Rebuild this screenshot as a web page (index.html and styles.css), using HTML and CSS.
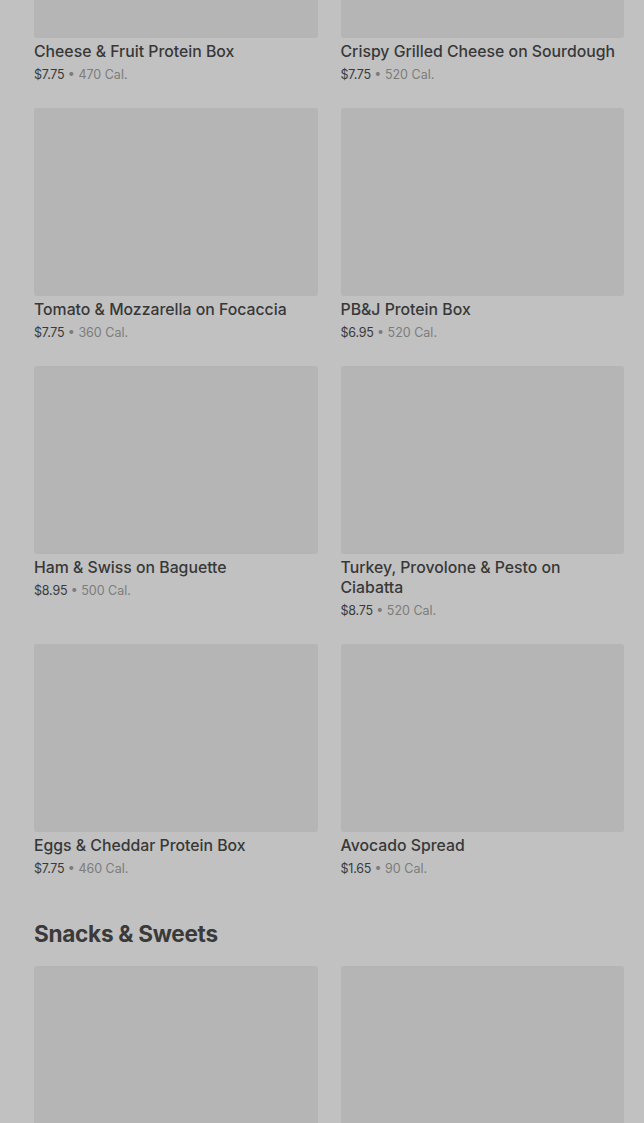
FILE: index.html
```html
<!DOCTYPE html>
<html>
	<head>
		<meta charset="utf-8">
		<title>Menu</title>
		<link rel="stylesheet" href="styles.css">
	</head>
	<body>
		<div class="menu">
			<ul class="grid">
				<li class="item">
					<div class="pic"></div>
					<p class="name">Cheese &amp; Fruit Protein Box</p>
					<p class="info">$7.75 <span class="cal">&bull; 470 Cal.</span></p>
				</li>
				<li class="item">
					<div class="pic"></div>
					<p class="name">Crispy Grilled Cheese on Sourdough</p>
					<p class="info">$7.75 <span class="cal">&bull; 520 Cal.</span></p>
				</li>
				<li class="item">
					<div class="pic"></div>
					<p class="name">Tomato &amp; Mozzarella on Focaccia</p>
					<p class="info">$7.75 <span class="cal">&bull; 360 Cal.</span></p>
				</li>
				<li class="item">
					<div class="pic"></div>
					<p class="name">PB&amp;J Protein Box</p>
					<p class="info">$6.95 <span class="cal">&bull; 520 Cal.</span></p>
				</li>
				<li class="item">
					<div class="pic"></div>
					<p class="name">Ham &amp; Swiss on Baguette</p>
					<p class="info">$8.95 <span class="cal">&bull; 500 Cal.</span></p>
				</li>
				<li class="item">
					<div class="pic"></div>
					<p class="name">Turkey, Provolone &amp; Pesto on Ciabatta</p>
					<p class="info">$8.75 <span class="cal">&bull; 520 Cal.</span></p>
				</li>
				<li class="item">
					<div class="pic"></div>
					<p class="name">Eggs &amp; Cheddar Protein Box</p>
					<p class="info">$7.75 <span class="cal">&bull; 460 Cal.</span></p>
				</li>
				<li class="item">
					<div class="pic"></div>
					<p class="name">Avocado Spread</p>
					<p class="info">$1.65 <span class="cal">&bull; 90 Cal.</span></p>
				</li>
			</ul>

			<h2 class="title">Snacks &amp; Sweets</h2>
			<ul class="grid">
				<li class="item">
					<div class="pic"></div>
				</li>
				<li class="item">
					<div class="pic"></div>
				</li>
			</ul>
		</div>
	</body>
</html>
```

FILE: styles.css
```css
*{
	margin: 0;
	padding: 0;
}

ul{
	list-style: none;
}

body{
	background-color: #c1c1c1;
	font-family: Inter, "Noto Sans", sans-serif;
	color: #3a3a3a;
	overflow: hidden;
}

/* page is scrolled, first row is cut at the top */
.menu{
	margin-top: -150px;
	padding: 0 20px 0 34px;
}

.grid{
	display: grid;
	grid-template-columns: 1fr 1fr;
	column-gap: 23px;
	row-gap: 23px;
}

.item .pic{
	height: 188px;
	background-color: #b5b5b5;
	border-radius: 3px;
}

.item .name{
	margin-top: 4px;
	font-size: 15.8px;
	line-height: 20px;
	font-weight: 500;
	color: #383838;
}

.item .info{
	margin-top: 3px;
	font-size: 12.5px;
	line-height: 20px;
	color: #3a3a3a;
	letter-spacing: -0.2px;
}

.item .info .cal{
	color: #7c7c7c;
	letter-spacing: 0;
}

.title{
	margin: 41px 0 18px;
	font-size: 22.6px;
	line-height: 28px;
	font-weight: 700;
	letter-spacing: -0.3px;
	color: #3a3a3a;
}
```
